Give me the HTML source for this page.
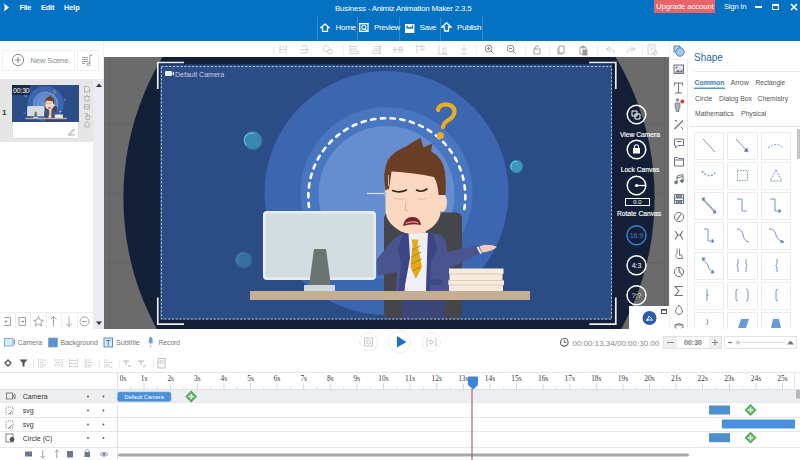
<!DOCTYPE html>
<html><head><meta charset="utf-8">
<style>
*{margin:0;padding:0;box-sizing:border-box}
html,body{width:800px;height:460px;overflow:hidden;background:#fff;font-family:"Liberation Sans",sans-serif;position:relative}
.a{position:absolute}
.t{position:absolute;white-space:nowrap;line-height:1}
#hdr{left:0;top:0;width:800px;height:41px;background:#0571c2}
.hw{color:#fff;font-size:8px}
.sep{position:absolute;width:1px;background:rgba(255,255,255,0.18)}
.tsep{position:absolute;width:1px;background:#ececec;top:44px;height:11px}
.ico{position:absolute}
</style></head><body>

<!-- HEADER -->
<div id="hdr" class="a">
  <svg class="a" style="left:3px;top:3px" width="7" height="9" viewBox="0 0 7 9"><path d="M0.5 0.3 L6 4.5 L0.5 8.7 Q3 4.5 0.5 0.3Z" fill="#fff"/></svg>
  <div class="t hw" style="left:19.5px;top:3.5px;font-size:7.4px;font-weight:bold;letter-spacing:-0.3px">File</div>
  <div class="t hw" style="left:41px;top:3.5px;font-size:7.4px;font-weight:bold;letter-spacing:-0.2px">Edit</div>
  <div class="t hw" style="left:64px;top:3.5px;font-size:7.4px;font-weight:bold;letter-spacing:-0.1px">Help</div>
  <div class="t hw" style="left:335px;top:4.6px;font-size:8px;letter-spacing:-0.22px">Business - Animiz Animation Maker 2.3.5</div>
  <div class="sep" style="left:317px;top:17px;height:24px"></div>
  <div class="sep" style="left:357px;top:17px;height:24px"></div>
  <div class="sep" style="left:399px;top:17px;height:24px"></div>
  <div class="sep" style="left:440px;top:17px;height:24px"></div>
  <div class="sep" style="left:482px;top:17px;height:24px"></div>
  <svg class="a" style="left:320px;top:23px" width="10" height="9" viewBox="0 0 10 9"><path d="M5 1 L9 4.5 H7.5 V8.3 H2.5 V4.5 H1Z" fill="none" stroke="#fff" stroke-width="1.3"/></svg>
  <div class="t hw" style="left:335.5px;top:23.5px;font-size:8px;letter-spacing:-0.3px">Home</div>
  <svg class="a" style="left:359px;top:23px" width="10" height="9" viewBox="0 0 10 9"><rect x="0.7" y="0.7" width="8.3" height="7.6" fill="none" stroke="#fff" stroke-width="1.3"/><circle cx="4.8" cy="4.3" r="2" fill="none" stroke="#fff" stroke-width="1.1"/><path d="M6.2 5.8 L8 7.8" stroke="#fff" stroke-width="1.2"/></svg>
  <div class="t hw" style="left:374px;top:23.5px;font-size:8px;letter-spacing:-0.35px">Preview</div>
  <svg class="a" style="left:405px;top:23.5px" width="10" height="9" viewBox="0 0 10 9"><rect x="0.7" y="0.7" width="8" height="7.6" fill="none" stroke="#fff" stroke-width="1.4"/><rect x="2.6" y="0.5" width="4.2" height="2.6" fill="#fff"/><rect x="1" y="4.6" width="7.4" height="3.5" fill="#fff"/></svg>
  <div class="t hw" style="left:419.5px;top:23.5px;font-size:8px;letter-spacing:-0.4px">Save</div>
  <svg class="a" style="left:441px;top:22px" width="11" height="10" viewBox="0 0 11 10"><path d="M5.5 0.8 L10 5 H7.5 V9 H3.5 V5 H1Z" fill="none" stroke="#fff" stroke-width="1.3"/></svg>
  <div class="t hw" style="left:457px;top:23.5px;font-size:8px;letter-spacing:-0.3px">Publish</div>
  <div class="a" style="left:654px;top:0;width:61px;height:13px;background:#e86468"></div>
  <div class="t hw" style="left:656px;top:3px;font-size:7.8px;letter-spacing:-0.1px">Upgrade account</div>
  <div class="t hw" style="left:724px;top:3px;font-size:7.6px;letter-spacing:-0.2px">Sign In</div>
  <div class="a" style="left:755px;top:6px;width:7px;height:2px;background:#fff"></div>
  <div class="a" style="left:772px;top:4px;width:7px;height:6px;border:1.5px solid #fff;border-top-width:2px"></div>
  <svg class="a" style="left:790px;top:3px" width="8" height="8" viewBox="0 0 8 8"><path d="M1 1 L7 7 M7 1 L1 7" stroke="#fff" stroke-width="1.6"/></svg>
</div>

<!-- LEFT PANEL -->
<div class="a" style="left:0;top:41px;width:104px;height:288px;background:#fff"></div>
<div class="a" style="left:2px;top:50px;width:73px;height:21px;border:1px solid #efefef;background:#fff"></div>
<svg class="a" style="left:11px;top:53px" width="14" height="14" viewBox="0 0 14 14"><circle cx="7" cy="7" r="5.6" fill="none" stroke="#8a8a8a" stroke-width="1"/><path d="M7 4 V10 M4 7 H10" stroke="#8a8a8a" stroke-width="1"/></svg>
<div class="t" style="left:30.5px;top:57px;font-size:7.4px;color:#80868f">New Scene</div>
<div class="a" style="left:77px;top:50px;width:22px;height:21px;border:1px solid #efefef"></div>
<svg class="a" style="left:76px;top:48px" width="24" height="24" viewBox="76 48 24 24"><path d="M82 57.5 H88 M82 59.5 H88 M82 61.5 H88 M82 63.5 H85" stroke="#8a8a8a" stroke-width="0.8" fill="none"/><path d="M89.8 64 V55.5 L92.3 55" stroke="#8a8a8a" stroke-width="0.9" fill="none"/><circle cx="88.5" cy="64.3" r="1.3" fill="none" stroke="#8a8a8a" stroke-width="0.9"/></svg>

<div class="a" style="left:0;top:79px;width:93px;height:63px;background:#e6e6e6"></div>
<div class="a" style="left:93px;top:79px;width:11px;height:250px;background:#eaecf2"></div>
<svg class="a" style="left:96px;top:83px" width="6" height="4" viewBox="0 0 6 4"><path d="M0 4 L3 0.5 L6 4Z" fill="#333"/></svg>
<div class="t" style="left:2px;top:109px;font-size:8px;color:#333;font-weight:bold">1</div>
<div class="a" style="left:12px;top:85px;width:67px;height:54px;background:#fff;border:1px solid #d8dde6"></div>
<svg class="a" style="left:12px;top:85px" width="67" height="37" viewBox="160 64.5 452 255" preserveAspectRatio="none"><use href="#illus"/></svg>
<div class="a" style="left:12px;top:85px;width:18px;height:10px;background:#1d2a44"></div>
<div class="t" style="left:13px;top:87px;font-size:7px;color:#fff;letter-spacing:-0.2px">00:30</div>
<svg class="a" style="left:67px;top:127px" width="9" height="9" viewBox="0 0 9 9"><path d="M1 8 H8 M2 6.5 L6.5 2 L7.5 3 L3 7.5 H2Z" fill="none" stroke="#999" stroke-width="0.8"/></svg>
<svg class="a" style="left:82px;top:84px" width="10" height="46" viewBox="82 84 10 46">
  <g fill="none" stroke="#b0b0b0" stroke-width="0.9">
    <path d="M84.5 86.5 H87.5 L89.5 88.5 V92 H84.5Z"/>
    <path d="M84 96.5 H90 M85 96.5 V101 H89 V96.5 M86 95.5 H88"/>
    <path d="M84.5 104.5 H89.5 V109 H84.5Z M84.5 106.7 H89.5"/>
    <path d="M84.5 113.5 H87.5 V117 M86 115.5 H89.5 V119.5 H86Z"/>
    <path d="M87 121.5 L89.8 123.8 L88.8 127 H85.2 L84.2 123.8Z"/>
  </g>
</svg>
<!-- scene bottom icons -->
<svg class="a" style="left:0;top:311px" width="104" height="18" viewBox="0 311 104 18">
  <rect x="0" y="311" width="93" height="18" fill="#fff"/>
  <rect x="93" y="311" width="11" height="18" fill="#eaecf2"/>
  <path d="M0 312.5 H93 M15.5 313 V328 M30.5 313 V328 M46.5 313 V328 M61.5 313 V328 M77.5 313 V328" stroke="#eeeeee" stroke-width="1"/>
  <g fill="none" stroke="#9a9a9a" stroke-width="0.9">
    <path d="M4 317.5 H10.5 V325.5 H4 M7.5 321.5 H5 L6.5 320 M5 321.5 L6.5 323"/>
    <path d="M19 317.5 H25.5 V325.5 H19 V317.5 M21 321.5 H24 L22.8 320.3 M24 321.5 L22.8 322.7"/>
    <path d="M38.5 316.5 L40 320 L43.5 320.3 L40.8 322.5 L41.7 326 L38.5 324 L35.3 326 L36.2 322.5 L33.5 320.3 L37 320Z"/>
    <path d="M53.5 316.5 V326.5 M50.5 319.5 L53.5 316.5 L56.5 319.5"/>
    <path d="M69 316.5 V326.5 M66 323.5 L69 326.5 L72 323.5"/>
    <circle cx="84.5" cy="321.5" r="4.5"/><path d="M82 321.5 H87"/>
  </g>
  <path d="M96 321.5 L99 325 L102 321.5Z" fill="#333"/>
</svg>

<div class="a" style="left:103px;top:41px;width:1px;height:38px;background:#eeeeee"></div>
<!-- TOOLBAR -->
<svg class="a" style="left:104px;top:41px" width="565" height="16" viewBox="104 41 565 16">
  <rect x="104" y="41" width="565" height="16" fill="#fff"/>
  <g stroke="#efefef" stroke-width="1"><path d="M273.5 44 V55 M343.5 44 V55 M476.5 44 V55 M525.5 44 V55 M549.5 44 V55 M597.5 44 V55 M642.5 44 V55"/></g>
  <g fill="none" stroke="#cdcdcd" stroke-width="0.9">
    <path d="M280 45 V54 M286 45 V54 M280 49.5 H286 M282 47 H284 M282 52 H284"/>
    <path d="M301 46 H307 M300 49.5 H309 M301 53 H307 M307 46 V53"/>
    <circle cx="326" cy="48.5" r="3"/><circle cx="330" cy="51.5" r="2.5"/>
    <path d="M350 45 V54 M350 46.5 H356 V49 H350 M350 51 H358 V53.5 H350"/>
    <path d="M380 45 V54 M374 46.5 H380 V49 H374 M372 51 H380 V53.5 H372"/>
    <path d="M393 49.5 H403 M395 46 V53 M399 47 h3 v5 h-3z"/>
    <path d="M416 46 H425 M417 46 V53 M421 46 V50 h3 v-4"/>
    <path d="M438 54 H447 M439 45 V54 M443 48 h3 v6 h-3z"/>
    <path d="M464 45 V53 M461 49 H467 M461 53 Q464 56 467 53"/>
    <path d="M606 49 L611 46 M606 49 L611 52 M606 49 H611 Q614 49 614 53"/>
    <path d="M635 49 L630 46 M635 49 L630 52 M635 49 H630 Q627 49 627 53"/>
    <path d="M648 45 h7 v9 h-7z M650 48 h3 M650 50 h3"/><circle cx="655" cy="53" r="2"/>
  </g>
  <g fill="none" stroke="#888" stroke-width="1">
    <circle cx="488.5" cy="48.5" r="3.3"/><path d="M491 51 L493.5 53.5 M487 48.5 H490 M488.5 47 V50"/>
    <circle cx="510.5" cy="48.5" r="3.3"/><path d="M513 51 L515.5 53.5 M509 48.5 H512"/>
  </g>
  <g fill="none" stroke="#999" stroke-width="0.9">
    <rect x="534" y="49" width="6" height="5"/><path d="M535 49 V47 Q537 44.5 539 47"/>
    <path d="M559 46 h5 v7 h-5z M558 47.5 V54 h5"/>
    <path d="M580 47 h6 v7 h-6z M582 46 h2 v2 h-2z"/><rect x="583" y="50" width="4" height="5" fill="#999"/>
  </g>
</svg>

<!-- CANVAS -->
<svg class="a" style="left:104px;top:57px" width="565" height="272" viewBox="104 57 565 272">
  <rect x="104" y="57" width="565" height="272" fill="#6b6b6b"/>
  <path d="M109.5 57 V329 M664.5 57 V329 M104 193.5 H669 M104 262.5 H669 M104 124.5 H669" stroke="#636363" stroke-width="1"/>
  <ellipse cx="389" cy="198" rx="265.6" ry="270" fill="#121f36"/>
  <g id="illus"><rect x="160" y="64.5" width="452" height="255" fill="#2c4c85"/>
  <circle cx="386.5" cy="193" r="122" fill="#3c67b0"/>
  <circle cx="386.5" cy="193" r="86" fill="#4876c1"/>
  <circle cx="386.5" cy="194" r="68" fill="#658dcf"/>
  <path d="M309 207 A78.5 78.5 0 1 1 464 211" fill="none" stroke="#fff" stroke-width="2.6" stroke-dasharray="4.2 5.6" stroke-linecap="round"/>
  <!-- bubbles -->
  <circle cx="253" cy="140.6" r="9.2" fill="#3a88ae" stroke="#2d6890" stroke-width="1"/>
  <path d="M246.5 145 A7 7 0 0 1 254 133.5" fill="none" stroke="#6cc0e0" stroke-width="1.2"/>
  <circle cx="243.7" cy="260" r="8.3" fill="#3570a0" stroke="#2e5f8e" stroke-width="1"/>
  <path d="M238 264 A6.5 6.5 0 0 1 244 253.5" fill="none" stroke="#4a88b8" stroke-width="1"/>
  <circle cx="516.4" cy="166.4" r="6.5" fill="#3d96bc" stroke="#2f6e98" stroke-width="0.8"/>
  <path d="M512 169.5 A5 5 0 0 1 517 161.5" fill="none" stroke="#78cce8" stroke-width="1"/>
  <!-- question mark -->
  <path d="M438 110 Q439 104.5 446 104.3 Q454 104.5 454.5 111.5 Q454.5 116.5 448.5 120 Q443.5 123 443 127" fill="none" stroke="#e9ac22" stroke-width="4.3" stroke-linecap="round"/>
  <circle cx="440.3" cy="135.5" r="3.6" fill="#e9ac22"/>
  <!-- monitor -->
  <rect x="263" y="211" width="113" height="69" rx="4" fill="#e6eef0"/>
  <rect x="265.5" y="213.5" width="108" height="64" rx="3" fill="#d3dde0"/>
  <path d="M314 249 H326 L331 286 H309Z" fill="#6a7470"/>
  <rect x="304" y="285" width="31" height="7" fill="#cfd8dc"/>
  <!-- chair back -->
  <rect x="384" y="212.5" width="78" height="106" rx="6" fill="#45464b"/>
  <!-- pants under desk -->
  <rect x="402" y="299" width="43" height="20" fill="#3b4578"/>
  <!-- body -->
  <path d="M403 234 L428 232 L440 235 Q447 238 447 252 L478 245.5 L481.5 253 L450 268 L449 291 L396 291 L397 272 L378 276 L377 259 L391 242 Q395 236 403 234Z" fill="#4a5590"/>
  <path d="M479.5 246.5 Q484 244 488 245 Q493 244.5 497 247 Q492 251.5 482 252.5Z" fill="#f5cdb4"/>
  <path d="M477.5 247 L481 253.5" stroke="#fff" stroke-width="1.6"/>
  <path d="M408 233 H428 L426.5 291 H404.5Z" fill="#eff0f5"/>
  <path d="M404 233.5 L408.5 232.5 L410 258 L404 291 L398.5 291 L401 262 L397.5 249Z" fill="#3d4682"/>
  <path d="M428 232.5 L433.5 234 L437.5 250 L431 262 L430 291 L426 291 L427 258Z" fill="#3d4682"/>
  <path d="M411.5 239.5 H418.5 L417.5 244.5 L422 267 L415.8 279 L410.5 267 L412.5 244.5Z" fill="#e3aa1e"/>
  <path d="M412 250 L420 246 M411.5 257 L421 252 M411 264 L421.5 259 M412 271 L420 267" stroke="#c18a0e" stroke-width="1.1"/>
  <rect x="428.5" y="279.5" width="14" height="5.5" fill="#3f4884"/>
  <!-- neck/face -->
  <rect x="404" y="222" width="22" height="11" fill="#efc3a3"/>
  <ellipse cx="442" cy="202.5" rx="5" ry="9.5" fill="#fbd9c0"/>
  <path d="M385.5 169 L440 169 L440.5 214 Q437 228 420 233.5 Q411 235.5 401 231.5 Q387 224 385.5 212Z" fill="#fbd9c0"/>
  <path d="M385.5 190 Q382 172 388 160 Q394 151 405 147 L420.5 137.5 L423.5 147.5 L432.5 143.5 L431 151 Q443 158 445 172 Q446.5 184 445.5 195 L438.5 195 Q438 184 434 177 Q414 172.5 391.5 171.5 L389 189Z" fill="#6a3e24"/>
  <path d="M388.5 175 V186" stroke="#c8b8a8" stroke-width="1"/>
  <path d="M392.5 190.5 Q399.5 193.5 406.5 190 M416.5 190 Q421.5 193 427 189" stroke="#33241c" stroke-width="1.6" fill="none" stroke-linecap="round"/>
  <path d="M394 198 Q400 200.5 406 198.5 M417 198.5 Q422 200.5 427 198" stroke="#e2b49a" stroke-width="0.9" fill="none"/>
  <path d="M406 201 L405 210 L408 211" stroke="#d9a78a" stroke-width="0.8" fill="none"/>
  <path d="M403 226 Q404.5 217 412 217 Q419.5 216.5 421 225 Q412 223 403 226Z" fill="#7a2228"/>
  <path d="M405.5 223.5 Q412 220.5 418.5 223" stroke="#e89a9a" stroke-width="1.2" fill="none"/>
  <path d="M367 193.5 H383" stroke="#dfe6f2" stroke-width="1.1"/>
  <circle cx="385.5" cy="193.5" r="1.8" fill="none" stroke="#d0dae8" stroke-width="0.9"/>
  <!-- papers -->
  <path d="M449 268.5 H503.5 V274 H502.5 V280.5 H504 V285 H503 V291.5 H449 V285 H448.3 V280.5 H449.5 V274 H449Z" fill="#f8ebde"/>
  <path d="M449.5 274 H503 M448.5 280.5 H503.5 M449 285 H503.5" stroke="#dccab4" stroke-width="0.9"/>
  <!-- desk -->
  <rect x="250" y="291" width="280" height="9" fill="#c6ae92"/>
  </g>
  <!-- dashed border -->
  <rect x="161.5" y="66.5" width="450" height="252.5" fill="none" stroke="#b4c0d8" stroke-width="1" stroke-dasharray="2.2 1.6"/>
  <!-- corner brackets -->
  <path d="M157.8 89 V62.5 H184 M589 62.5 H615.8 V89 M157.8 297.5 V324.2 H184 M589.3 324.2 H615.8 V297.5" fill="none" stroke="#eceef2" stroke-width="1.7"/>
  <!-- default camera label -->
  <rect x="165" y="71" width="7" height="5" rx="1" fill="#e8ecf4"/><path d="M172 73.5 L174 71.5 V76 Z" fill="#e8ecf4"/>
  <text x="175" y="76.5" font-size="7" fill="#c9d2e4" font-family="Liberation Sans">Default Camera</text>
  <!-- right canvas controls -->
  <g fill="none" stroke="#fff" stroke-width="1.5">
    <circle cx="636.5" cy="114.5" r="9.3"/>
    <circle cx="636.5" cy="149.5" r="9.3"/>
    <circle cx="636.5" cy="185.5" r="9.3"/>
    <circle cx="636.5" cy="235.3" r="9.5" stroke="#3f7fd0"/>
    <circle cx="636.5" cy="265.3" r="9.5"/>
    <circle cx="636.5" cy="295.3" r="9.5"/>
  </g>
  <path d="M632 111 h5 v5 h-5z M635 114 h5 v5 h-5z" fill="none" stroke="#fff" stroke-width="1"/>
  <rect x="633" y="148" width="7" height="5.5" fill="#fff"/><path d="M634.5 148 V146 Q636.5 143.5 638.5 146 V148" fill="none" stroke="#fff" stroke-width="1.1"/>
  <path d="M636.5 185.5 H645.5" stroke="#fff" stroke-width="1.3"/><circle cx="636.5" cy="185.5" r="1.6" fill="#fff"/>
  <rect x="625.5" y="198.5" width="24" height="7" fill="#121f36" stroke="#fff" stroke-width="1"/>
  <text x="637.5" y="204.3" font-size="6" fill="#fff" text-anchor="middle" font-family="Liberation Sans">0.0</text>
  <g font-family="Liberation Sans" font-size="6.7" fill="#ffffff" text-anchor="middle" stroke="#ffffff" stroke-width="0.15">
    <text x="640" y="137">View Camera</text>
    <text x="640" y="171.5">Lock Canvas</text>
    <text x="639" y="215.5">Rotate Canvas</text>
  </g>
  <g font-family="Liberation Sans" font-size="7" text-anchor="middle">
    <text x="636.5" y="238" fill="#3f7fd0">16:9</text>
    <text x="636.5" y="268" fill="#fff">4:3</text>
    <text x="636.5" y="298" fill="#e0e0e0">?:?</text>
  </g>
  <rect x="629" y="306" width="40" height="23" fill="#fff"/>
  <circle cx="649.5" cy="318" r="7" fill="#2d5aa8"/>
  <path d="M646 320 h7 M647 321 l2 -5 l3 3" stroke="#fff" stroke-width="1" fill="none"/>
  <rect x="661.5" y="309.5" width="5" height="4" fill="none" stroke="#444" stroke-width="0.9"/><path d="M661.5 310 H666.5" stroke="#444" stroke-width="1.2"/>
</svg>

<!-- RIGHT ICON COLUMN -->
<svg class="a" style="left:669px;top:41px" width="131" height="288" viewBox="669 41 131 288">
  <rect x="669" y="41" width="131" height="288" fill="#fff"/>
  <path d="M687.5 60 V329" stroke="#e8e8e8"/>
  <path d="M669.5 41 V329" stroke="#f0f0f0"/>
  <path d="M669 59.5 H688" stroke="#ececec"/>
  <path d="M674 46 h6 v6 h-6z" fill="#bcd4f0" stroke="#4a80c0" stroke-width="1"/>
  <circle cx="680" cy="52" r="4.2" fill="#a8c6ec" stroke="#4a80c0" stroke-width="1"/>
  <g fill="none" stroke="#6f7682" stroke-width="1">
    <rect x="674" y="65" width="9.5" height="8.5" fill="#e4e8ee"/><path d="M675 72.5 L678 69.5 L680 71.5 L682.5 69 V72.5Z" fill="#6f7682" stroke="none"/><circle cx="676.5" cy="67.5" r="0.9" fill="#6f7682" stroke="none"/>
    <path d="M675 93 h7 M678.5 93 V83 M674.5 85.5 V83 H682.5 V85.5" stroke-width="1.1"/>
    <circle cx="677.5" cy="100" r="1.8" fill="#8a96a8" stroke="none"/><path d="M675 103 h5 v5 h-1 v3.5 h-3 v-3.5 h-1z" fill="#a8b0bc" stroke="#6f7682" stroke-width="0.7"/>
    <path d="M674.5 129 L683 120.5" stroke-width="1.4"/><path d="M675 120 l1 1.5 l1 -1.5 M681 127 l1.5 1 l0 1.5"/>
    <path d="M674.5 139 h9 v6.5 h-5.5 l-2.5 2.5 v-2.5 h-1z"/><path d="M676.5 141.5 h5"/>
    <path d="M674.5 157.5 h3 l1 1 h5 v7.5 h-9z M674.5 160 h9"/>
    <path d="M677 182.5 V176 L683 174.5 V181"/><circle cx="676" cy="182.5" r="1.4" fill="#6f7682"/><circle cx="682" cy="181" r="1.4" fill="#6f7682"/><path d="M677 178 l6 -1.5"/>
    <rect x="674.5" y="194.5" width="9" height="9"/><path d="M674.5 198 h9 M674.5 200.5 h9"/><path d="M676.5 195 v2.5 h5 v-2.5 M676.5 203 v-2 h5 v2" fill="#8a96a8"/>
    <circle cx="679" cy="217" r="4.6"/><path d="M677 220 L681 214" stroke-width="1.2"/>
    <path d="M675 231 l3 4 l-3 4.5 M683 231 l-3 4 l3 4.5 M676.5 235 h5" stroke-width="1.1"/>
    <path d="M677 248.5 v5 l-1.5 2 l2 3 h5 l-1 -4 l-2 1 v-7" stroke-width="0.9"/>
    <circle cx="679" cy="272" r="4.6"/><path d="M679 267.4 V272 L682.5 275" fill="#c0c6d0"/>
    <path d="M683 286.5 H675 L679 291 L675 295.5 H683" stroke-width="1.1"/>
    <path d="M679 305 Q675 310 675.5 312 Q677 314.5 679 314.5 Q681 314.5 682.5 312 Q683 310 679 305Z"/>
    <path d="M675 328 v-3 q4 -3 8 0 v3 M675 325 h8 M676 328 h1 M681 328 h1" stroke-width="1"/>
  </g>
  <circle cx="682.3" cy="101.5" r="1.9" fill="#e03530"/>
  <text x="694" y="60.5" font-family="Liberation Sans" font-size="10" fill="#2b6a9e">Shape</text>
  <path d="M694 71.5 H800" stroke="#ececec"/>
  <g font-family="Liberation Sans" font-size="6.8" fill="#555">
    <text x="694.5" y="84.5" fill="#3a78b0" font-weight="bold" font-size="6.9">Common</text>
    <text x="730.5" y="84.5" font-size="7">Arrow</text>
    <text x="755.5" y="84.5" font-size="6.6">Rectangle</text>
    <text x="695" y="100.5">Circle</text>
    <text x="719" y="100.5">Dialog Box</text>
    <text x="757.5" y="100.5">Chemistry</text>
    <text x="695" y="116">Mathematics</text>
    <text x="741" y="116">Physical</text>
  </g>
  <rect x="694" y="87.5" width="31" height="1.5" fill="#5b94cc"/>
  <path d="M690 126.5 H800" stroke="#e4e4e4"/>
  <rect x="797" y="129" width="3" height="30" fill="#c6c6c6"/>
  <g fill="none" stroke="#ebebeb" stroke-width="1">
    <rect x="694.5" y="132.5" width="29" height="27"/><rect x="727.5" y="132.5" width="30" height="27"/><rect x="761.5" y="132.5" width="29" height="27"/>
    <rect x="694.5" y="162.5" width="29" height="27"/><rect x="727.5" y="162.5" width="30" height="27"/><rect x="761.5" y="162.5" width="29" height="27"/>
    <rect x="694.5" y="192.5" width="29" height="27"/><rect x="727.5" y="192.5" width="30" height="27"/><rect x="761.5" y="192.5" width="29" height="27"/>
    <rect x="694.5" y="222.5" width="29" height="27"/><rect x="727.5" y="222.5" width="30" height="27"/><rect x="761.5" y="222.5" width="29" height="27"/>
    <rect x="694.5" y="252.5" width="29" height="27"/><rect x="727.5" y="252.5" width="30" height="27"/><rect x="761.5" y="252.5" width="29" height="27"/>
    <rect x="694.5" y="282.5" width="29" height="27"/><rect x="727.5" y="282.5" width="30" height="27"/><rect x="761.5" y="282.5" width="29" height="27"/>
    <rect x="694.5" y="312.5" width="29" height="27"/><rect x="727.5" y="312.5" width="30" height="27"/><rect x="761.5" y="312.5" width="29" height="27"/>
  </g>
  <g fill="none" stroke="#7896c0" stroke-width="1">
    <path d="M703 139 L715 152" stroke="#8a96a8"/>
    <path d="M736 139 L747 151"/><path d="M744 151 L748 152 L747 148Z" fill="#4a7fc0"/>
    <path d="M768 148 Q776 141 784 148" stroke-dasharray="2 1.5"/>
    <path d="M702 171 Q709 180 716 172" stroke-dasharray="2 1.5" stroke-width="1.3"/>
    <rect x="737.5" y="170.5" width="10" height="10" stroke-dasharray="1.5 1.2"/>
    <path d="M776 170 L782 181 H770Z" stroke-dasharray="2 1.2"/>
    <path d="M703 199 L715 212" stroke-width="1.3"/><path d="M702 198 l3 0 l-2 3z M716 213 l-3 0 l2 -3z" fill="#4a7fc0"/>
    <path d="M737 199 H742 V211 H747"/>
    <path d="M770 199 H775 V211 H780"/><path d="M779 209 l2 2 l-2 2z" fill="#4a7fc0"/>
    <path d="M704 229 H708 V241 H713"/><path d="M712 239 l2 2 l-2 2z" fill="#4a7fc0"/>
    <path d="M737 229 Q742 229 743 235 Q744 241 749 242"/>
    <path d="M769 229 Q775 229 776 235 Q778 241 783 242"/><path d="M781 240 l3 2 l-3 1z" fill="#4a7fc0"/>
    <path d="M703 259 l5 6 v2 l5 6"/><path d="M702 258 l3 0 l-2 3z M714 273 l-3 0 l2 -3z" fill="#4a7fc0"/>
    <path d="M738 259 v5 l-1.5 1.5 l1.5 1.5 v5 M746 259 v5 l1.5 1.5 l-1.5 1.5 v5"/>
    <path d="M777 259 v5 l-1.5 1.5 l1.5 1.5 v5"/>
    <path d="M707 289 v12 M707 295 h2"/>
    <path d="M738 289 q-2 0 -2 2 v8 q0 2 2 2 M746 289 q2 0 2 2 v8 q0 2 -2 2"/>
    <path d="M778 289 q-2 0 -2 2 v8 q0 2 2 2"/>
    <path d="M707 319 q2 2 0 6"/>
  </g>
  <path d="M738 328 L741 319 H749 L746 328Z" fill="#6a9ad8"/>
  <path d="M771 328 L773 319 H779 L781 328Z" fill="#6a9ad8"/>
</svg>

<!-- BOTTOM -->
<svg class="a" style="left:0;top:329px" width="800" height="131" viewBox="0 329 800 131">
  <rect x="0" y="329" width="800" height="131" fill="#fff"/>
  <!-- row 1 -->
  <rect x="4.5" y="338.5" width="8.5" height="7.5" fill="#dceaf6" stroke="#7aa6d4" stroke-width="0.9"/><path d="M13.5 340.5 L15 339 V345.5 L13.5 344Z" fill="#7aa6d4"/>
  <rect x="48.5" y="338" width="9" height="9" fill="#5e93cc" stroke="#7aa6d4" stroke-width="0.8"/>
  <rect x="104" y="338" width="8.5" height="9" fill="#d8e8f6" stroke="#5a8fc8"/><path d="M106 340.5 h4.5 M108.2 340.5 v5" stroke="#4a7ab5" stroke-width="1"/>
  <rect x="149" y="337" width="3.5" height="6" rx="1.7" fill="#6aa0d8"/><path d="M148 342 q2.7 3 5.5 0 M150.7 345 v2" stroke="#6aa0d8" fill="none" stroke-width="0.8"/>
  <g font-family="Liberation Sans" font-size="6.9" fill="#777">
    <text x="17.5" y="345">Camera</text>
    <text x="60.5" y="345" font-size="7">Background</text>
    <text x="116" y="345" font-size="7.1">Subtitle</text>
    <text x="158.5" y="345" font-size="6.7">Record</text>
  </g>
  <circle cx="368.5" cy="342" r="9" fill="none" stroke="#eeeeee" stroke-width="1"/>
  <rect x="364.5" y="338" width="8" height="8" fill="none" stroke="#c0c0c0" stroke-width="0.9"/><circle cx="368.5" cy="342" r="2" fill="none" stroke="#c0c0c0" stroke-width="0.9"/>
  <circle cx="399.5" cy="342" r="11" fill="#fff" stroke="#eeeeee" stroke-width="1"/>
  <path d="M397 336 L406.5 342 L397 347.5Z" fill="#1d6fd0"/>
  <circle cx="431.5" cy="342" r="9" fill="none" stroke="#eeeeee" stroke-width="1"/>
  <path d="M428 338 h-1 v8 h1 M435 338 h1 v8 h-1 M430 339.5 L434 342 L430 344.5Z" fill="none" stroke="#c0c0c0" stroke-width="0.9"/>
  <circle cx="564.3" cy="342.3" r="3.8" fill="none" stroke="#666" stroke-width="1.2"/><path d="M564.3 340 V342.5 H566.3" stroke="#666" stroke-width="1" fill="none"/>
  <text x="572.5" y="345.6" font-family="Liberation Sans" font-size="8" fill="#888">00:00:13.34/00:00:30.00</text>
  <rect x="663.5" y="336.5" width="58" height="12" fill="#fff" stroke="#e2e2e2"/>
  <rect x="664" y="337" width="13" height="11" fill="#efefef"/><rect x="709" y="337" width="12" height="11" fill="#efefef"/>
  <path d="M667 342.5 h7 M712 342.5 h6 M715 339.5 v6" stroke="#888" stroke-width="1.2"/>
  <text x="693" y="345" font-family="Liberation Sans" font-size="7" fill="#777" text-anchor="middle" font-weight="bold">00:30</text>
  <rect x="724.5" y="336.5" width="72" height="12" fill="#fff" stroke="#e2e2e2"/>
  <path d="M728 342.5 h4" stroke="#777" stroke-width="1.3"/>
  <path d="M738 342.5 H785" stroke="#ddd" stroke-width="1.2"/><circle cx="738" cy="342.5" r="2" fill="#ccc"/>
  <path d="M787 344.5 L790.5 340.5 L794 344.5Z" fill="#777"/>
  <!-- row 2 icons -->
  <path d="M8 360 L11 363 L8 366 L5 363Z" fill="none" stroke="#555" stroke-width="1.3"/>
  <path d="M19.5 359.5 H27.5 L24.5 363 V366.5 H22.5 V363Z" fill="#555"/>
  <g fill="none" stroke="#b4b4b4" stroke-width="0.8">
    <path d="M38.5 359 V368 M40 360 h6 M40 362.5 h4 M40 365 h6 M40 367 h4" stroke-dasharray="1.5 0.7"/>
    <path d="M54.5 360 h6 M55.5 362.5 h5 M54.5 365 h6 M62 359 V368" stroke-dasharray="1.5 0.7"/>
    <path d="M69.5 359 V368 M77.5 359 V368 M70.5 360.5 h6 M70.5 363.5 h6 M70.5 366.5 h6" stroke-dasharray="1.5 0.7"/>
    <path d="M85 359 V368 M86 360 h5 M86 362.5 h6 M86 365 h6 M86 367 h5" stroke-dasharray="1.5 0.7"/>
    <path d="M104 360 h4 M104 362.5 h9 M104 365 h6 M104 367 h9" stroke-dasharray="1.5 0.7"/>
    <path d="M123 361 h6 M126 361 v4 M128 366 h3" stroke-width="1"/>
    <path d="M138 361 h6 M141 361 v4 M143 366 h3" stroke-width="1"/>
    <path d="M158 358.5 h7 v9.5 h-7z M159.5 361 h4 M159.5 363 h4" stroke="#aaa"/>
  </g>
  <path d="M33.5 359 V368 M99.5 359 V368 M119.5 359 V368 M153.5 359 V368" stroke="#ececec"/>
  <path d="M0 372.5 H800" stroke="#e6e6e6"/>
  <!-- timeline ruler -->
  <path d="M117.5 372 V460" stroke="#e4e4e4"/>
  <path d="M0 389.5 H800" stroke="#e0e0e0"/>
  <g id="ticks"><path d="M117.5 383.5 V389.5" stroke="#cfcfcf" stroke-width="0.9"/><path d="M130.8 386.5 V389.5" stroke="#d6d6d6" stroke-width="0.8"/><text x="123.0" y="380.5" font-family="Liberation Serif" font-size="7.4" fill="#3a3a3a" text-anchor="middle">0s</text><path d="M144.1 383.5 V389.5" stroke="#cfcfcf" stroke-width="0.9"/><path d="M157.4 386.5 V389.5" stroke="#d6d6d6" stroke-width="0.8"/><text x="144.1" y="380.5" font-family="Liberation Serif" font-size="7.4" fill="#3a3a3a" text-anchor="middle">1s</text><path d="M170.7 383.5 V389.5" stroke="#cfcfcf" stroke-width="0.9"/><path d="M184.0 386.5 V389.5" stroke="#d6d6d6" stroke-width="0.8"/><text x="170.7" y="380.5" font-family="Liberation Serif" font-size="7.4" fill="#3a3a3a" text-anchor="middle">2s</text><path d="M197.3 383.5 V389.5" stroke="#cfcfcf" stroke-width="0.9"/><path d="M210.6 386.5 V389.5" stroke="#d6d6d6" stroke-width="0.8"/><text x="197.3" y="380.5" font-family="Liberation Serif" font-size="7.4" fill="#3a3a3a" text-anchor="middle">3s</text><path d="M223.9 383.5 V389.5" stroke="#cfcfcf" stroke-width="0.9"/><path d="M237.2 386.5 V389.5" stroke="#d6d6d6" stroke-width="0.8"/><text x="223.9" y="380.5" font-family="Liberation Serif" font-size="7.4" fill="#3a3a3a" text-anchor="middle">4s</text><path d="M250.5 383.5 V389.5" stroke="#cfcfcf" stroke-width="0.9"/><path d="M263.8 386.5 V389.5" stroke="#d6d6d6" stroke-width="0.8"/><text x="250.5" y="380.5" font-family="Liberation Serif" font-size="7.4" fill="#3a3a3a" text-anchor="middle">5s</text><path d="M277.1 383.5 V389.5" stroke="#cfcfcf" stroke-width="0.9"/><path d="M290.4 386.5 V389.5" stroke="#d6d6d6" stroke-width="0.8"/><text x="277.1" y="380.5" font-family="Liberation Serif" font-size="7.4" fill="#3a3a3a" text-anchor="middle">6s</text><path d="M303.7 383.5 V389.5" stroke="#cfcfcf" stroke-width="0.9"/><path d="M317.0 386.5 V389.5" stroke="#d6d6d6" stroke-width="0.8"/><text x="303.7" y="380.5" font-family="Liberation Serif" font-size="7.4" fill="#3a3a3a" text-anchor="middle">7s</text><path d="M330.3 383.5 V389.5" stroke="#cfcfcf" stroke-width="0.9"/><path d="M343.6 386.5 V389.5" stroke="#d6d6d6" stroke-width="0.8"/><text x="330.3" y="380.5" font-family="Liberation Serif" font-size="7.4" fill="#3a3a3a" text-anchor="middle">8s</text><path d="M356.9 383.5 V389.5" stroke="#cfcfcf" stroke-width="0.9"/><path d="M370.2 386.5 V389.5" stroke="#d6d6d6" stroke-width="0.8"/><text x="356.9" y="380.5" font-family="Liberation Serif" font-size="7.4" fill="#3a3a3a" text-anchor="middle">9s</text><path d="M383.5 383.5 V389.5" stroke="#cfcfcf" stroke-width="0.9"/><path d="M396.8 386.5 V389.5" stroke="#d6d6d6" stroke-width="0.8"/><text x="383.5" y="380.5" font-family="Liberation Serif" font-size="7.4" fill="#3a3a3a" text-anchor="middle">10s</text><path d="M410.1 383.5 V389.5" stroke="#cfcfcf" stroke-width="0.9"/><path d="M423.4 386.5 V389.5" stroke="#d6d6d6" stroke-width="0.8"/><text x="410.1" y="380.5" font-family="Liberation Serif" font-size="7.4" fill="#3a3a3a" text-anchor="middle">11s</text><path d="M436.7 383.5 V389.5" stroke="#cfcfcf" stroke-width="0.9"/><path d="M450.0 386.5 V389.5" stroke="#d6d6d6" stroke-width="0.8"/><text x="436.7" y="380.5" font-family="Liberation Serif" font-size="7.4" fill="#3a3a3a" text-anchor="middle">12s</text><path d="M463.3 383.5 V389.5" stroke="#cfcfcf" stroke-width="0.9"/><path d="M476.6 386.5 V389.5" stroke="#d6d6d6" stroke-width="0.8"/><text x="463.3" y="380.5" font-family="Liberation Serif" font-size="7.4" fill="#3a3a3a" text-anchor="middle">13s</text><path d="M489.9 383.5 V389.5" stroke="#cfcfcf" stroke-width="0.9"/><path d="M503.2 386.5 V389.5" stroke="#d6d6d6" stroke-width="0.8"/><text x="489.9" y="380.5" font-family="Liberation Serif" font-size="7.4" fill="#3a3a3a" text-anchor="middle">14s</text><path d="M516.5 383.5 V389.5" stroke="#cfcfcf" stroke-width="0.9"/><path d="M529.8 386.5 V389.5" stroke="#d6d6d6" stroke-width="0.8"/><text x="516.5" y="380.5" font-family="Liberation Serif" font-size="7.4" fill="#3a3a3a" text-anchor="middle">15s</text><path d="M543.1 383.5 V389.5" stroke="#cfcfcf" stroke-width="0.9"/><path d="M556.4 386.5 V389.5" stroke="#d6d6d6" stroke-width="0.8"/><text x="543.1" y="380.5" font-family="Liberation Serif" font-size="7.4" fill="#3a3a3a" text-anchor="middle">16s</text><path d="M569.7 383.5 V389.5" stroke="#cfcfcf" stroke-width="0.9"/><path d="M583.0 386.5 V389.5" stroke="#d6d6d6" stroke-width="0.8"/><text x="569.7" y="380.5" font-family="Liberation Serif" font-size="7.4" fill="#3a3a3a" text-anchor="middle">17s</text><path d="M596.3 383.5 V389.5" stroke="#cfcfcf" stroke-width="0.9"/><path d="M609.6 386.5 V389.5" stroke="#d6d6d6" stroke-width="0.8"/><text x="596.3" y="380.5" font-family="Liberation Serif" font-size="7.4" fill="#3a3a3a" text-anchor="middle">18s</text><path d="M622.9 383.5 V389.5" stroke="#cfcfcf" stroke-width="0.9"/><path d="M636.2 386.5 V389.5" stroke="#d6d6d6" stroke-width="0.8"/><text x="622.9" y="380.5" font-family="Liberation Serif" font-size="7.4" fill="#3a3a3a" text-anchor="middle">19s</text><path d="M649.5 383.5 V389.5" stroke="#cfcfcf" stroke-width="0.9"/><path d="M662.8 386.5 V389.5" stroke="#d6d6d6" stroke-width="0.8"/><text x="649.5" y="380.5" font-family="Liberation Serif" font-size="7.4" fill="#3a3a3a" text-anchor="middle">20s</text><path d="M676.1 383.5 V389.5" stroke="#cfcfcf" stroke-width="0.9"/><path d="M689.4 386.5 V389.5" stroke="#d6d6d6" stroke-width="0.8"/><text x="676.1" y="380.5" font-family="Liberation Serif" font-size="7.4" fill="#3a3a3a" text-anchor="middle">21s</text><path d="M702.7 383.5 V389.5" stroke="#cfcfcf" stroke-width="0.9"/><path d="M716.0 386.5 V389.5" stroke="#d6d6d6" stroke-width="0.8"/><text x="702.7" y="380.5" font-family="Liberation Serif" font-size="7.4" fill="#3a3a3a" text-anchor="middle">22s</text><path d="M729.3 383.5 V389.5" stroke="#cfcfcf" stroke-width="0.9"/><path d="M742.6 386.5 V389.5" stroke="#d6d6d6" stroke-width="0.8"/><text x="729.3" y="380.5" font-family="Liberation Serif" font-size="7.4" fill="#3a3a3a" text-anchor="middle">23s</text><path d="M755.9 383.5 V389.5" stroke="#cfcfcf" stroke-width="0.9"/><path d="M769.2 386.5 V389.5" stroke="#d6d6d6" stroke-width="0.8"/><text x="755.9" y="380.5" font-family="Liberation Serif" font-size="7.4" fill="#3a3a3a" text-anchor="middle">24s</text><path d="M782.5 383.5 V389.5" stroke="#cfcfcf" stroke-width="0.9"/><text x="782.5" y="380.5" font-family="Liberation Serif" font-size="7.4" fill="#3a3a3a" text-anchor="middle">25s</text></g>
  <!-- tracks -->
  <rect x="0" y="390" width="800" height="12.5" fill="#eceef2"/>
  <path d="M0 402.5 H800 M0 417.5 H800 M0 431.5 H800 M0 447.5 H800" stroke="#e6e6e6"/>
  <path d="M117.5 372 V447" stroke="#e2e2e2"/>
  <g font-family="Liberation Sans" font-size="7" fill="#333">
    <text x="22.8" y="399.3">Camera</text>
    <text x="22.8" y="413">svg</text>
    <text x="22.8" y="426.8">svg</text>
    <text x="22.8" y="440.5">Circle (C)</text>
  </g>
  <g fill="#555"><circle cx="88" cy="396.5" r="0.9"/><circle cx="103.5" cy="396.5" r="0.9"/><circle cx="88" cy="410.5" r="0.9"/><circle cx="103.5" cy="410.5" r="0.9"/><circle cx="88" cy="424.5" r="0.9"/><circle cx="103.5" cy="424.5" r="0.9"/><circle cx="88" cy="438" r="0.9"/><circle cx="103.5" cy="438" r="0.9"/></g>
  <g fill="none" stroke="#777" stroke-width="0.9">
    <rect x="6.5" y="393" width="6" height="6"/><path d="M13 396 l2 -2 v5 z"/>
    <rect x="6" y="407" width="7" height="7" stroke-dasharray="1 1"/><path d="M9 414 l3 -3"/>
    <rect x="6" y="421" width="7" height="7" stroke-dasharray="1 1"/><path d="M9 428 l3 -3"/>
    <rect x="6" y="434" width="7" height="8"/>
  </g>
  <circle cx="12" cy="439.5" r="2.4" fill="#555"/>
  <g fill="#6b7790">
    <rect x="25" y="451.5" width="7" height="5"/>
    <rect x="67" y="451" width="6" height="6.5"/>
    <rect x="84.5" y="452" width="5.5" height="5"/>
  </g>
  <g fill="none" stroke="#8a96aa" stroke-width="0.9"><path d="M42.7 450 V458 M40.5 456 l2.2 2.2 l2.2 -2.2 M56.8 458 V450 M54.6 452.2 l2.2 -2.2 l2.2 2.2"/><path d="M85.5 452 v-1.5 q1.7 -2 3.5 0 v1.5"/><path d="M100 454.3 q4 -4 8 0 q-4 4 -8 0z"/></g>
  <circle cx="104" cy="454.3" r="1.4" fill="#6b7790"/>
  <rect x="118" y="453.5" width="571" height="3" rx="1.5" fill="#a8a8a8"/>
  <path d="M794.5 372 V390" stroke="#e4e4e4"/><rect x="796" y="390" width="4" height="8.5" fill="#b8b8b8"/>
  <!-- clips -->
  <rect x="117.5" y="392" width="53.5" height="9.5" rx="2" fill="#4b8fda" stroke="#76aee6" stroke-width="0.6"/>
  <text x="144.2" y="399" font-family="Liberation Sans" font-size="5.6" fill="#fff" text-anchor="middle">Default Camera</text>
  <g fill="#7cc47e" stroke="#4fa555" stroke-width="1.3">
    <path d="M191.2 391.5 L196.2 396.5 L191.2 401.5 L186.2 396.5Z"/>
    <path d="M750.5 405 L755.5 410 L750.5 415 L745.5 410Z"/>
    <path d="M750.5 432.7 L755.5 437.7 L750.5 442.7 L745.5 437.7Z"/>
  </g>
  <path d="M191.2 394 V399 M188.7 396.5 H193.7 M750.5 407.5 V412.5 M748 410 H753 M750.5 435.2 V440.2 M748 437.7 H753" stroke="#fff" stroke-width="1.1"/>
  <rect x="709" y="405.5" width="21" height="9" fill="#4f8fd0"/>
  <rect x="722" y="419.5" width="73" height="9" fill="#4a90e2"/>
  <rect x="709" y="433.2" width="21" height="9" fill="#4f8fd0"/>
  <!-- playhead -->
  <path d="M472 389 V460" stroke="#a86a6a" stroke-width="1.2"/>
  <path d="M468 376.5 H477 Q478 376.5 478 378 V385 L473 389.5 L468 385 Z" fill="#3a85d8"/>
</svg>
</body></html>
